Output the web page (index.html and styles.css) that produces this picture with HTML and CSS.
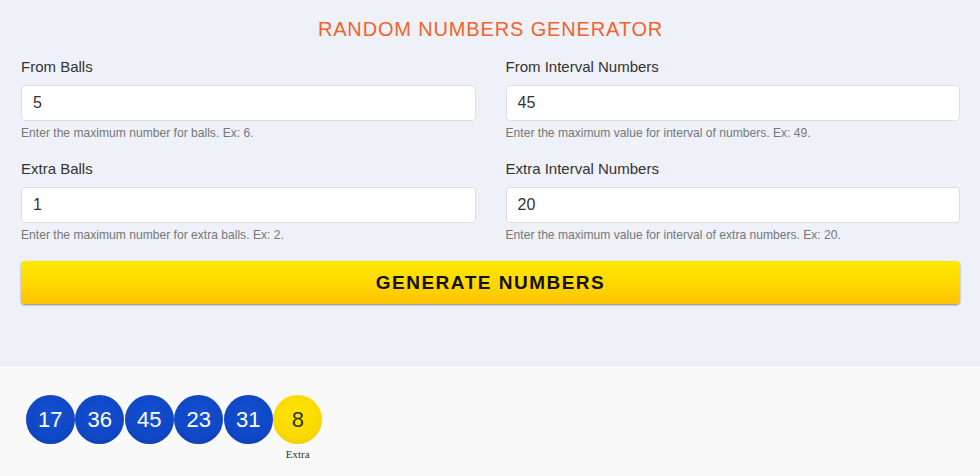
FILE: index.html
```
<!DOCTYPE html>
<html>
<head>
<meta charset="utf-8">
<link rel="stylesheet" href="styles.css">
</head>
<body>
<section class="generator">
  <h1 class="title">RANDOM NUMBERS GENERATOR</h1>
  <div class="grid">
    <div class="field">
      <label class="label">From Balls</label>
      <input class="input" type="text" value="5">
      <p class="help">Enter the maximum number for balls. Ex: 6.</p>
    </div>
    <div class="field">
      <label class="label">From Interval Numbers</label>
      <input class="input" type="text" value="45">
      <p class="help">Enter the maximum value for interval of numbers. Ex: 49.</p>
    </div>
    <div class="field">
      <label class="label">Extra Balls</label>
      <input class="input" type="text" value="1">
      <p class="help">Enter the maximum number for extra balls. Ex: 2.</p>
    </div>
    <div class="field">
      <label class="label">Extra Interval Numbers</label>
      <input class="input" type="text" value="20">
      <p class="help">Enter the maximum value for interval of extra numbers. Ex: 20.</p>
    </div>
  </div>
  <button class="btn">GENERATE NUMBERS</button>
</section>
<section class="results">
  <div class="balls">
    <div class="ball-item"><span class="ball">17</span></div>
    <div class="ball-item"><span class="ball">36</span></div>
    <div class="ball-item"><span class="ball">45</span></div>
    <div class="ball-item"><span class="ball">23</span></div>
    <div class="ball-item"><span class="ball">31</span></div>
    <div class="ball-item"><span class="ball extra">8</span><span class="ball-caption">Extra</span></div>
  </div>
</section>
</body>
</html>
```
FILE: styles.css
```
* { box-sizing: border-box; }
html, body { margin: 0; padding: 0; }
body {
  font-family: "Liberation Sans", Arial, sans-serif;
  background: #f9f9f9;
  color: #333;
}
.generator {
  background: #eef1f8;
  height: 366px;
  padding: 16px 20px 0 21px;
  border-bottom: 1px solid #e8ebf1;
}
.title {
  margin: 0 0 16px;
  text-align: center;
  font-size: 20px;
  font-weight: normal;
  letter-spacing: 0.85px;
  color: #f4622a;
  line-height: 26px;
}
.grid {
  display: grid;
  grid-template-columns: 1fr 1fr;
  column-gap: 30px;
  row-gap: 19px;
}
.field {
  display: flex;
  flex-direction: column;
}
.label {
  font-size: 15px;
  line-height: 18px;
  color: #333;
  margin-bottom: 9px;
}
.input {
  height: 36px;
  border: 1px solid #dcdfe4;
  border-radius: 4px;
  background: #fff;
  padding: 0 11px;
  font-family: "Liberation Sans", Arial, sans-serif;
  font-size: 16px;
  color: #333;
  outline: none;
}
.help {
  margin: 5px 0 0;
  font-size: 12.1px;
  line-height: 15px;
  color: #777;
}
.btn {
  display: block;
  width: 100%;
  height: 43px;
  margin-top: 18px;
  border: none;
  border-radius: 4px;
  background: linear-gradient(to bottom, #ffe800 0%, #ffd600 55%, #ffc200 100%);
  box-shadow: 0 1px 2px rgba(0,0,0,0.45);
  font-family: "Liberation Sans", Arial, sans-serif;
  font-weight: bold;
  font-size: 19px;
  letter-spacing: 1.5px;
  color: #111;
  cursor: pointer;
}
.results {
  padding: 29px 26px 0;
}
.balls {
  display: flex;
  gap: 1px;
}
.ball-item {
  display: flex;
  flex-direction: column;
  align-items: center;
  width: 48.5px;
}
.ball {
  display: flex;
  align-items: center;
  justify-content: center;
  width: 49px;
  height: 49px;
  border-radius: 50%;
  background: radial-gradient(circle at 50% 40%, #1450d2 0%, #0f47c4 62%, #0a38a2 100%);
  color: #fff;
  font-size: 22px;
  font-family: "Liberation Sans", Arial, sans-serif;
}
.ball.extra {
  background: radial-gradient(circle at 50% 40%, #ffe400 0%, #f9d900 62%, #e6c200 100%);
  color: #333;
}
.ball-caption {
  margin-top: 4px;
  font-family: "Liberation Serif", "Times New Roman", serif;
  font-size: 11px;
  color: #333;
}
```
